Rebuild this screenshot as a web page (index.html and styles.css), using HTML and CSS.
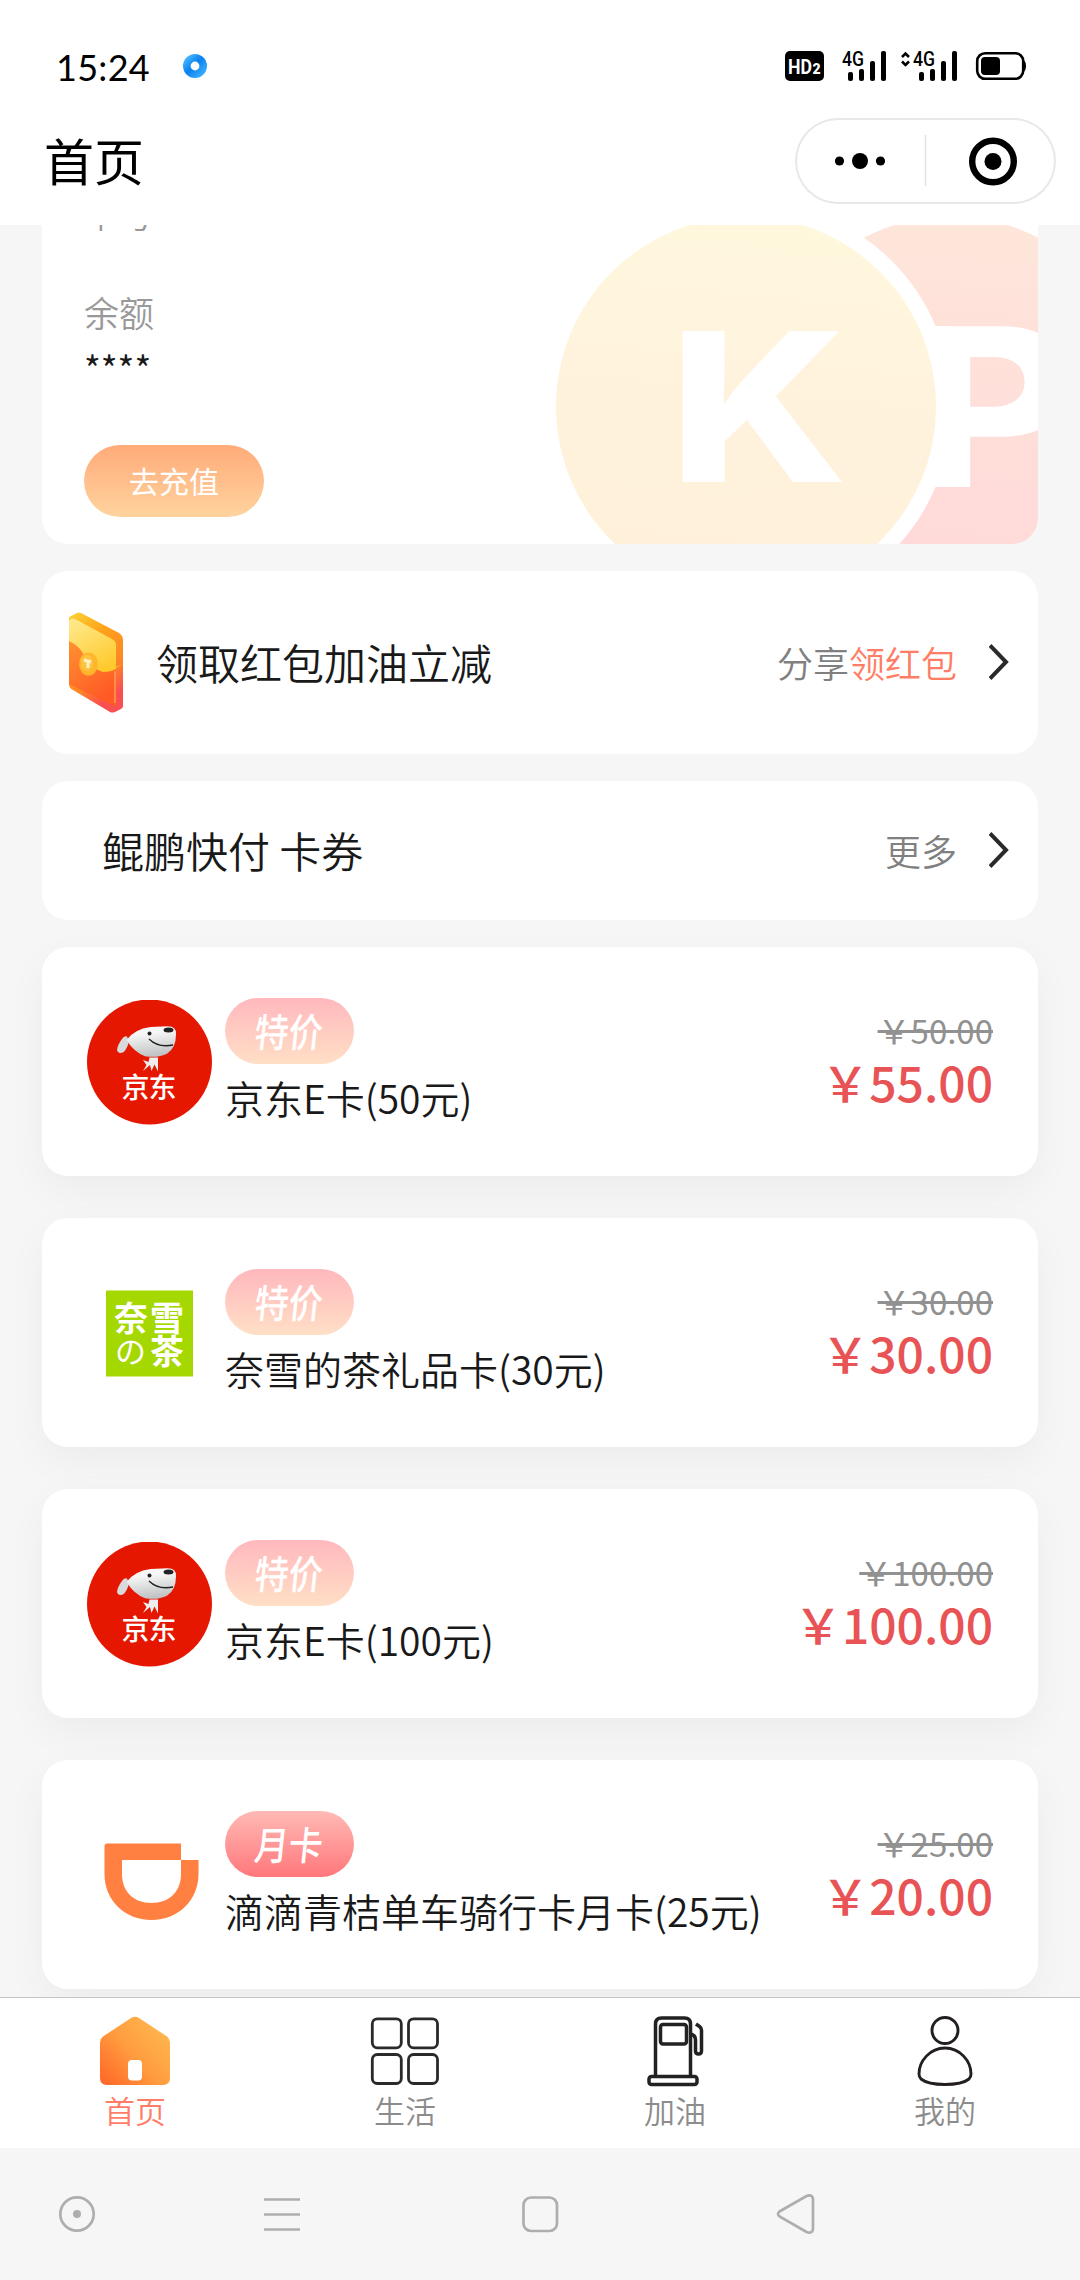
FILE: index.html
```html
<!DOCTYPE html>
<html lang="zh-CN">
<head>
<meta charset="utf-8">
<title>首页</title>
<link rel="stylesheet" href="styles.css">
</head>
<body>
<div class="screen">
  <header class="top">
    <div class="status">
      <span class="clock">15:24</span>
      <svg class="app-dot" width="24" height="24" viewBox="0 0 24 24"><defs><linearGradient id="dot" x1="0" y1="0" x2="1" y2="1"><stop offset="0" stop-color="#42b4ff"/><stop offset=".45" stop-color="#0c80ee"/><stop offset="1" stop-color="#38adff"/></linearGradient></defs><circle cx="12" cy="12" r="8.2" fill="none" stroke="url(#dot)" stroke-width="7.6"/></svg>
      <svg class="signals" width="246" height="36" viewBox="782 48 246 36">
        <rect x="785" y="51" width="39" height="30" rx="5"/>
        <text class="hd" x="788" y="74" textLength="24" lengthAdjust="spacingAndGlyphs">HD</text>
        <text class="hd two" x="812.5" y="73.5">2</text>
        <text class="net" x="842" y="66" textLength="22" lengthAdjust="spacingAndGlyphs">4G</text>
        <g id="bars"><rect x="848" y="72" width="5" height="9" rx="2"/><rect x="859" y="69" width="5" height="12" rx="2"/><rect x="870" y="61" width="5" height="20" rx="2"/><rect x="881" y="51" width="5" height="30" rx="2"/></g>
        <path d="M902 57l3.500-3.500 3.500 3.500M902 61.500l3.500 3.500 3.500-3.500" fill="none" stroke="#000" stroke-width="2.500"/>
        <text class="net" x="913" y="66" textLength="22" lengthAdjust="spacingAndGlyphs">4G</text>
        <use href="#bars" x="71"/>
        <rect x="977.200" y="53.200" width="46" height="25.600" rx="8" fill="none" stroke="#000" stroke-width="2.600"/>
        <rect x="981" y="57" width="19" height="18" rx="4"/>
        <path d="M1023 60q3 1 3 6t-3 6z"/>
      </svg>
    </div>
    <div class="nav">
      <h1>首页</h1>
      <div class="capsule">
        <svg width="261" height="86" viewBox="795 118 261 86"><circle cx="839.500" cy="161" r="4.600"/><circle cx="860" cy="161" r="8"/><circle cx="880.500" cy="161" r="4.600"/><path d="M925.500 135v51" stroke="#e2e2e2" stroke-width="1.500"/><circle cx="993" cy="161.500" r="20.800" fill="none" stroke="#000" stroke-width="6.400"/><circle cx="993" cy="161.500" r="8.500"/></svg>
      </div>
    </div>
  </header>

  <main class="content">
    <section class="card account">
      <svg class="watermark" width="500" height="344" viewBox="538 200 500 344">
        <defs>
          <linearGradient id="k" x1=".55" y1="0" x2=".45" y2="1"><stop offset="0" stop-color="#fff8dd"/><stop offset=".5" stop-color="#fff2dd"/><stop offset="1" stop-color="#fff1d8"/></linearGradient>
          <linearGradient id="p" x1=".55" y1="0" x2=".45" y2="1"><stop offset="0" stop-color="#fee6da"/><stop offset="1" stop-color="#ffd8d9"/></linearGradient>
        </defs>
        <circle cx="951" cy="406.500" r="190" fill="url(#p)"/>
        <text class="mark" transform="translate(911.500 487) scale(1.16 1)" font-size="221">P</text>
        <circle cx="746" cy="406.500" r="206" fill="#fff"/>
        <circle cx="746" cy="406.500" r="190" fill="url(#k)"/>
        <text class="mark" transform="translate(669 481.500) scale(1.17 1)" font-size="207">K</text>
        <path d="M936 326h16v161h-16z" fill="#fff"/>
      </svg>
      <p class="label">卡号</p>
      <p class="label balance">余额</p>
      <p class="value">****</p>
      <button class="recharge">去充值</button>
    </section>

    <section class="card row coupon">
      <svg width="56" height="102" viewBox="68 611 56 102">
        <defs>
          <linearGradient id="e1" x1="0" y1="0" x2=".4" y2="1"><stop offset="0" stop-color="#fbd435"/><stop offset=".35" stop-color="#ffa31b"/><stop offset=".75" stop-color="#ff8426"/><stop offset="1" stop-color="#fa4f50"/></linearGradient>
          <linearGradient id="e2" x1="0" y1="0" x2=".5" y2="1"><stop offset="0" stop-color="#ff9330"/><stop offset="1" stop-color="#ff5924"/></linearGradient>
          <linearGradient id="e3" x1=".2" y1="0" x2=".7" y2="1"><stop offset="0" stop-color="#ffe88a"/><stop offset="1" stop-color="#ffc92b"/></linearGradient>
        </defs>
        <path d="M69 619q0-2 2-3l6-3q2-1 4 0l38 20q4 3 4 7v66q0 2-2 3l-6 3q-3 1-5 0L73 690q-4-2-4-6z" fill="url(#e1)"/>
        <path d="M69 640l47 28v38q-1 1-4-1L69 684z" fill="url(#e2)"/>
        <path d="M123 664q-8 8-20 7l13-5z" fill="#ff9a28"/>
        <path d="M69 622q1-6 8-2l35 19q4 2 4 6v24q-5 3-13 3-12-4-18-15-5-11-16-16z" fill="url(#e3)"/>
        <ellipse cx="88.500" cy="664" rx="9.500" ry="11.500" fill="#ffb52c"/><ellipse cx="87" cy="663" rx="6" ry="8" fill="#ffc344"/>
        <path d="M84 660l7 2M88 661v7" stroke="#fff2c2" stroke-width="3"/><path d="M115 671v32" stroke="#ff9c56" stroke-width="1.500"/>
      </svg>
      <span class="row-title">领取红包加油立减</span>
      <span class="row-more">分享<em>领红包</em></span>
      <svg class="arrow" width="20" height="36" viewBox="0 0 20 36"><path d="M1 1.500l16 16.500L1 34.500" fill="none" stroke="#2a2a2a" stroke-width="4"/></svg>
    </section>

    <section class="card row tickets">
      <span class="row-title">鲲鹏快付 卡券</span>
      <span class="row-more">更多</span>
      <svg class="arrow" width="20" height="36" viewBox="0 0 20 36"><path d="M1 1.500l16 16.500L1 34.500" fill="none" stroke="#2a2a2a" stroke-width="4"/></svg>
    </section>

    <section class="items">
      <article class="card item">
        <svg class="logo" viewBox="87 1000 125 125">
          <defs>
            <linearGradient id="dog" x1="0" y1="0" x2=".2" y2="1"><stop offset=".3" stop-color="#f7f7f7"/><stop offset="1" stop-color="#c2c4c5"/></linearGradient>
            <g id="jd">
              <circle cx="149.500" cy="1062" r="62.500" fill="#e61700"/>
              <path d="M127 1036.500q-3-1-5 2.500-4.500 6-5 11 1 4 6 2.500 4-3 6-11z" fill="#d8d9da"/>
              <path d="M126.500 1040q8-11 24-13l17-.8q9 0 8.500 8 0 14-9 19.500-9 4.500-22 2.500-11-4-18.500-16.200z" fill="url(#dog)"/>
              <ellipse cx="168.500" cy="1030" rx="5" ry="2.500" fill="#222"/><circle cx="149.500" cy="1033.500" r="2" fill="#222"/>
              <path d="M149 1039q9 9 24 6" fill="none" stroke="#222" stroke-width="1.300"/>
              <path d="M149.500 1057.500h8.500v14l-3.500-7-3 6.500-1.500-6-7 6 3.500-6-3.500-5 5.500 2z" fill="#eee"/>
              <text class="jd-name" x="121.500" y="1097.500" textLength="55">京东</text>
            </g>
          </defs>
          <use href="#jd"/>
        </svg>
        <div class="info"><span class="badge"><b>特价</b></span><h2>京东E卡(50元)</h2></div>
        <div class="price"><del>￥50.00</del><strong>￥55.00</strong></div>
      </article>
      <article class="card item">
        <svg class="logo" viewBox="87 1271 125 125">
          <path d="M106 1290.500h87v86h-87z" fill="#a5d700"/>
          <g class="tea"><text x="114" y="1330.500">奈</text><text x="150" y="1330.500">雪</text><text x="115" y="1363" class="no">の</text><text x="150" y="1364">茶</text></g>
        </svg>
        <div class="info"><span class="badge"><b>特价</b></span><h2>奈雪的茶礼品卡(30元)</h2></div>
        <div class="price"><del>￥30.00</del><strong>￥30.00</strong></div>
      </article>
      <article class="card item">
        <svg class="logo" viewBox="87 1000 125 125"><use href="#jd"/></svg>
        <div class="info"><span class="badge"><b>特价</b></span><h2>京东E卡(100元)</h2></div>
        <div class="price"><del>￥100.00</del><strong>￥100.00</strong></div>
      </article>
      <article class="card item">
        <svg class="logo" viewBox="87 1813 125 125"><path fill="#ff8040" fill-rule="evenodd" d="M107 1843.500h74V1860h17.500v14c0 26-20 46-47 46s-47-20-47-46v-28q0-2.500 2.500-2.500zM122 1860v14c0 18 12 29 29.500 29s29.500-11 29.500-29v-14z"/></svg>
        <div class="info"><span class="badge month"><b>月卡</b></span><h2>滴滴青桔单车骑行卡月卡(25元)</h2></div>
        <div class="price"><del>￥25.00</del><strong>￥20.00</strong></div>
      </article>
    </section>
  </main>

  <nav class="tabs">
    <a class="tab active">
      <svg width="74" height="74" viewBox="98 2014 74 74"><defs><linearGradient id="h" x1="1" y1=".1" x2="0" y2="1"><stop offset="0" stop-color="#ffbb50"/><stop offset=".5" stop-color="#ff9d40"/><stop offset="1" stop-color="#ff6426"/></linearGradient></defs><path fill="url(#h)" d="M131 2018q4-2.500 8 0l28 18.500q3 2.500 3 6V2078q0 7-7 7h-56q-7 0-7-7v-35.500q0-3.500 3-6z"/><rect x="128" y="2060" width="14" height="20.500" rx="4" fill="#fff"/></svg>
      <span>首页</span></a>
    <a class="tab">
      <svg width="74" height="74" viewBox="368 2014 74 74" fill="none" stroke="#2a2a2a" stroke-width="2.800"><rect x="372.300" y="2018.800" width="29" height="29" rx="5"/><rect x="408.500" y="2018.800" width="29" height="29" rx="5"/><rect x="372.300" y="2054.500" width="29" height="29" rx="5"/><rect x="408.500" y="2054.500" width="29" height="29" rx="5"/></svg>
      <span>生活</span></a>
    <a class="tab">
      <svg width="74" height="74" viewBox="638 2014 74 74" fill="none" stroke="#222" stroke-width="3.500"><path d="M655.500 2076v-52q0-6 6-6h23q6 0 6 6v52"/><rect x="660.500" y="2024.500" width="26" height="19.500" rx="2.500"/><rect x="649" y="2076.500" width="48" height="8" rx="2.500"/><path d="M690.500 2034q5 1 5 6v11q0 3 3 3t3-3v-21q0-2-2-3.500l-3.500-2.500"/></svg>
      <span>加油</span></a>
    <a class="tab">
      <svg width="74" height="74" viewBox="908 2014 74 74" fill="none" stroke="#231f20" stroke-width="2.900"><circle cx="945" cy="2030.500" r="13"/><path d="M945 2048c-15 0-26 13-26 26 0 2 .5 3.500 2 5 5 4 14 5.500 24 5.500s19-1.500 24-5.500c1.500-1.500 2-3 2-5 0-13-11-26-26-26z"/></svg>
      <span>我的</span></a>
  </nav>

  <footer class="system">
    <svg width="1080" height="132" viewBox="0 2148 1080 132" fill="none" stroke="#aeaeae" stroke-width="2.700"><circle cx="77" cy="2214" r="16.700"/><circle cx="77" cy="2214" r="4" fill="#aeaeae" stroke="none"/><path d="M264 2199.500h36M264 2214.500h36M264 2229.500h36"/><rect x="523.500" y="2197.500" width="33.500" height="33.500" rx="7.500"/><path d="M779.500 2211.500l27-15.500q6-2 6.500 3v30q-.5 5-6.500 3l-27-15.500q-3-2.500 0-5z"/></svg>
  </footer>
</div>
</body>
</html>
```
FILE: styles.css
```css
* { box-sizing: border-box; margin: 0; padding: 0; }
body {
  width: 1080px;
  font-family: "Noto Sans CJK SC", sans-serif;
  font-weight: 350;
  color: #191919;
  background: #f6f6f6;
}
svg { display: block; flex: none; }
.screen { display: flex; flex-direction: column; height: 2280px; overflow: hidden; }

.top { height: 225px; flex: none; background: #fff; }
.status { display: flex; align-items: center; height: 118px; padding: 14px 52px 0 56px; }
.clock { width: 127px; padding-top: 2px; font: 400 36px/44px Lato, sans-serif; letter-spacing: .3px; color: #000; }
.signals { margin-left: auto; }
.hd { fill: #fff; font: 700 21px Roboto, sans-serif; }
.hd.two { font-size: 14px; font-weight: 900; }
.net { font: 500 20px Roboto, sans-serif; }
.nav { display: flex; justify-content: space-between; padding: 0 24px 0 44px; }
h1 { font-size: 50px; font-weight: 400; line-height: 82px; color: #000; }
.capsule { width: 261px; height: 86px; border-radius: 43px; box-shadow: inset 0 0 0 2px #e8e8e8; }

.content { flex: 1; min-height: 0; overflow: hidden; padding: 0 42px; }
.card { background: #fff; border-radius: 26px; }
.account { position: relative; height: 344px; margin-top: -25px; padding-left: 42px; overflow: hidden; }
.watermark { position: absolute; right: 0; top: 0; }
.mark { font-family: Inter, sans-serif; font-weight: 800; fill: #fff; }
.label { font-size: 35px; line-height: 50px; margin-top: -12px; color: #999; }
.label.balance { margin-top: 49px; }
.value { margin-top: 6px; font-size: 36px; font-weight: 400; line-height: 48px; height: 48px; }
.recharge {
  display: block; width: 180px; height: 72px; margin-top: 54px; border: 0; border-radius: 36px;
  padding-bottom: 3px;
  font: 400 30px/66px "Noto Sans CJK SC", sans-serif; color: #fff;
  background: linear-gradient(#ffab79, #ffd39e);
}
.row { display: flex; align-items: center; margin-top: 27px; }
.coupon { height: 183px; padding: 0 29px 2px 26px; }
.tickets { height: 139px; padding: 0 29px 2px 60px; }
.row-title { font-size: 42px; }
.coupon .row-title { margin-left: 32px; }
.row-more { margin-left: auto; font-size: 36px; color: #808080; }
.row-more em { font-style: normal; color: #ff7d66; }
.arrow { margin-left: 32px; }

.items { display: flex; flex-direction: column; gap: 42px; margin-top: 27px; }
.item { display: flex; flex: none; height: 229px; padding: 0 45px; box-shadow: 0 14px 42px rgba(0, 0, 0, .045); }
.logo { width: 125px; height: 125px; margin-top: 53px; }
.jd-name { font-size: 28px; font-weight: 500; fill: #fff; }
.tea { font-size: 34px; font-weight: 700; fill: #fff; }
.no { font-family: "Noto Sans CJK JP", sans-serif; font-size: 31px; font-weight: 400; }
.info { margin: 51px 0 0 13px; }
.badge {
  display: flex; align-items: center; justify-content: center; width: 129px; height: 66px;
  border-radius: 33px; color: #fff; background: linear-gradient(#ffb8bd, #ffdfc6);
}
.badge b { font-size: 35px; font-weight: 500; line-height: 60px; transform: translateY(-1px) skewX(-6deg) scale(.97, 1.12); }
.badge.month { background: linear-gradient(#ffbab5, #ff777b); }
h2 { margin-top: 5px; font-size: 39px; font-weight: 350; line-height: 56px; white-space: nowrap; }
.price { display: flex; flex-direction: column; align-items: flex-end; margin: 61px 0 0 auto; }
del { font-size: 33px; font-weight: 400; line-height: 44px; color: #919191; }
strong { font-size: 48px; font-weight: 500; line-height: 58px; color: #e85355; }

.tabs { display: flex; flex: none; height: 151px; border-top: 1px solid #c6c6c6; background: #fff; }
.tab { display: flex; flex: 1; flex-direction: column; align-items: center; padding-top: 16px; }
.tab span { font-size: 31px; line-height: 44px; color: #8c8c8c; }
.tab.active span { color: #ff7d66; }
.system { flex: none; height: 132px; background: #f6f6f6; }
```
